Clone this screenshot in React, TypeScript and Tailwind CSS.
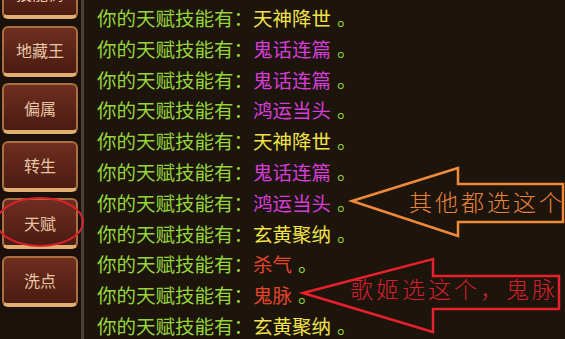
import React from "react";

type Row = { skill: string; color: string };

const rows: Row[] = [
  { skill: "天神降世", color: "text-[#f0e24a]" },
  { skill: "鬼话连篇", color: "text-[#d43ed6]" },
  { skill: "鬼话连篇", color: "text-[#d43ed6]" },
  { skill: "鸿运当头", color: "text-[#d43ed6]" },
  { skill: "天神降世", color: "text-[#f0e24a]" },
  { skill: "鬼话连篇", color: "text-[#d43ed6]" },
  { skill: "鸿运当头", color: "text-[#d43ed6]" },
  { skill: "玄黄聚纳", color: "text-[#f0e24a]" },
  { skill: "杀气", color: "text-[#e2452c]" },
  { skill: "鬼脉", color: "text-[#e2452c]" },
  { skill: "玄黄聚纳", color: "text-[#f0e24a]" },
];

const tabs = ["技能树", "地藏王", "偏属", "转生", "天赋", "洗点"];

function SideButton({ label }: { label: string }) {
  return (
    <div className="h-[53px] w-[78px] shrink-0 rounded-[7px] bg-[#1a0d07] p-[1px]">
      <div className="flex h-full w-full items-center justify-center rounded-[6px] border-2 border-[#a9703f] border-b-[4px] border-b-[#e3ae72] bg-gradient-to-b from-[#6f2e20] to-[#4b1b12] text-[16px] text-[#e6c6a4]">
        {label}
      </div>
    </div>
  );
}

export default function App() {
  return (
    <div
      className="relative flex h-[339px] w-[565px] overflow-hidden bg-[#1d140c]"
      style={{ fontFamily: '"Noto Sans CJK SC", "Noto Sans", sans-serif' }}
    >
      {/* left tab column */}
      <div className="flex w-[81px] shrink-0 flex-col bg-[#1b110a] pl-[1px]">
        <div className="-mt-[33px] flex flex-col gap-[4.5px]">
          {tabs.map((t) => (
            <SideButton key={t} label={t} />
          ))}
        </div>
      </div>
      <div className="w-[3px] shrink-0 bg-[#4a4038]" />

      {/* skill list */}
      <div className="flex flex-col pl-[13px] pt-[3px]">
        {rows.map((r, i) => (
          <div key={i} className="h-[30.8px] whitespace-nowrap text-[19.5px] leading-[30.8px]">
            <span className="text-[#96d43c]">你的天赋技能有：</span>
            <span className={r.color}>{r.skill}</span>
            <span className="ml-[6px] text-[#96d43c]">。</span>
          </div>
        ))}
      </div>

      {/* annotations */}
      <svg
        className="pointer-events-none absolute left-0 top-0"
        width="565"
        height="339"
        viewBox="0 0 565 339"
      >
        <ellipse cx="40" cy="222" rx="43" ry="24" fill="none" stroke="#d8222e" strokeWidth="2" />
        <polygon
          points="352,201 458,168 458,184 563,184 563,222 458,222 458,236"
          fill="none"
          stroke="#f08a3a"
          strokeWidth="2.5"
        />
        <text x="409" y="211" fill="#e8843e" fontSize="23" letterSpacing="3" fontWeight="300">
          其他都选这个
        </text>
        <polygon
          points="303,293 433,259 433,276 559,276 559,309 433,309 433,332"
          fill="none"
          stroke="#e8202c"
          strokeWidth="2.5"
        />
        <text x="350" y="298" fill="#d4202c" fontSize="23" letterSpacing="3" fontWeight="300">
          歌姬选这个，鬼脉
        </text>
      </svg>
    </div>
  );
}
